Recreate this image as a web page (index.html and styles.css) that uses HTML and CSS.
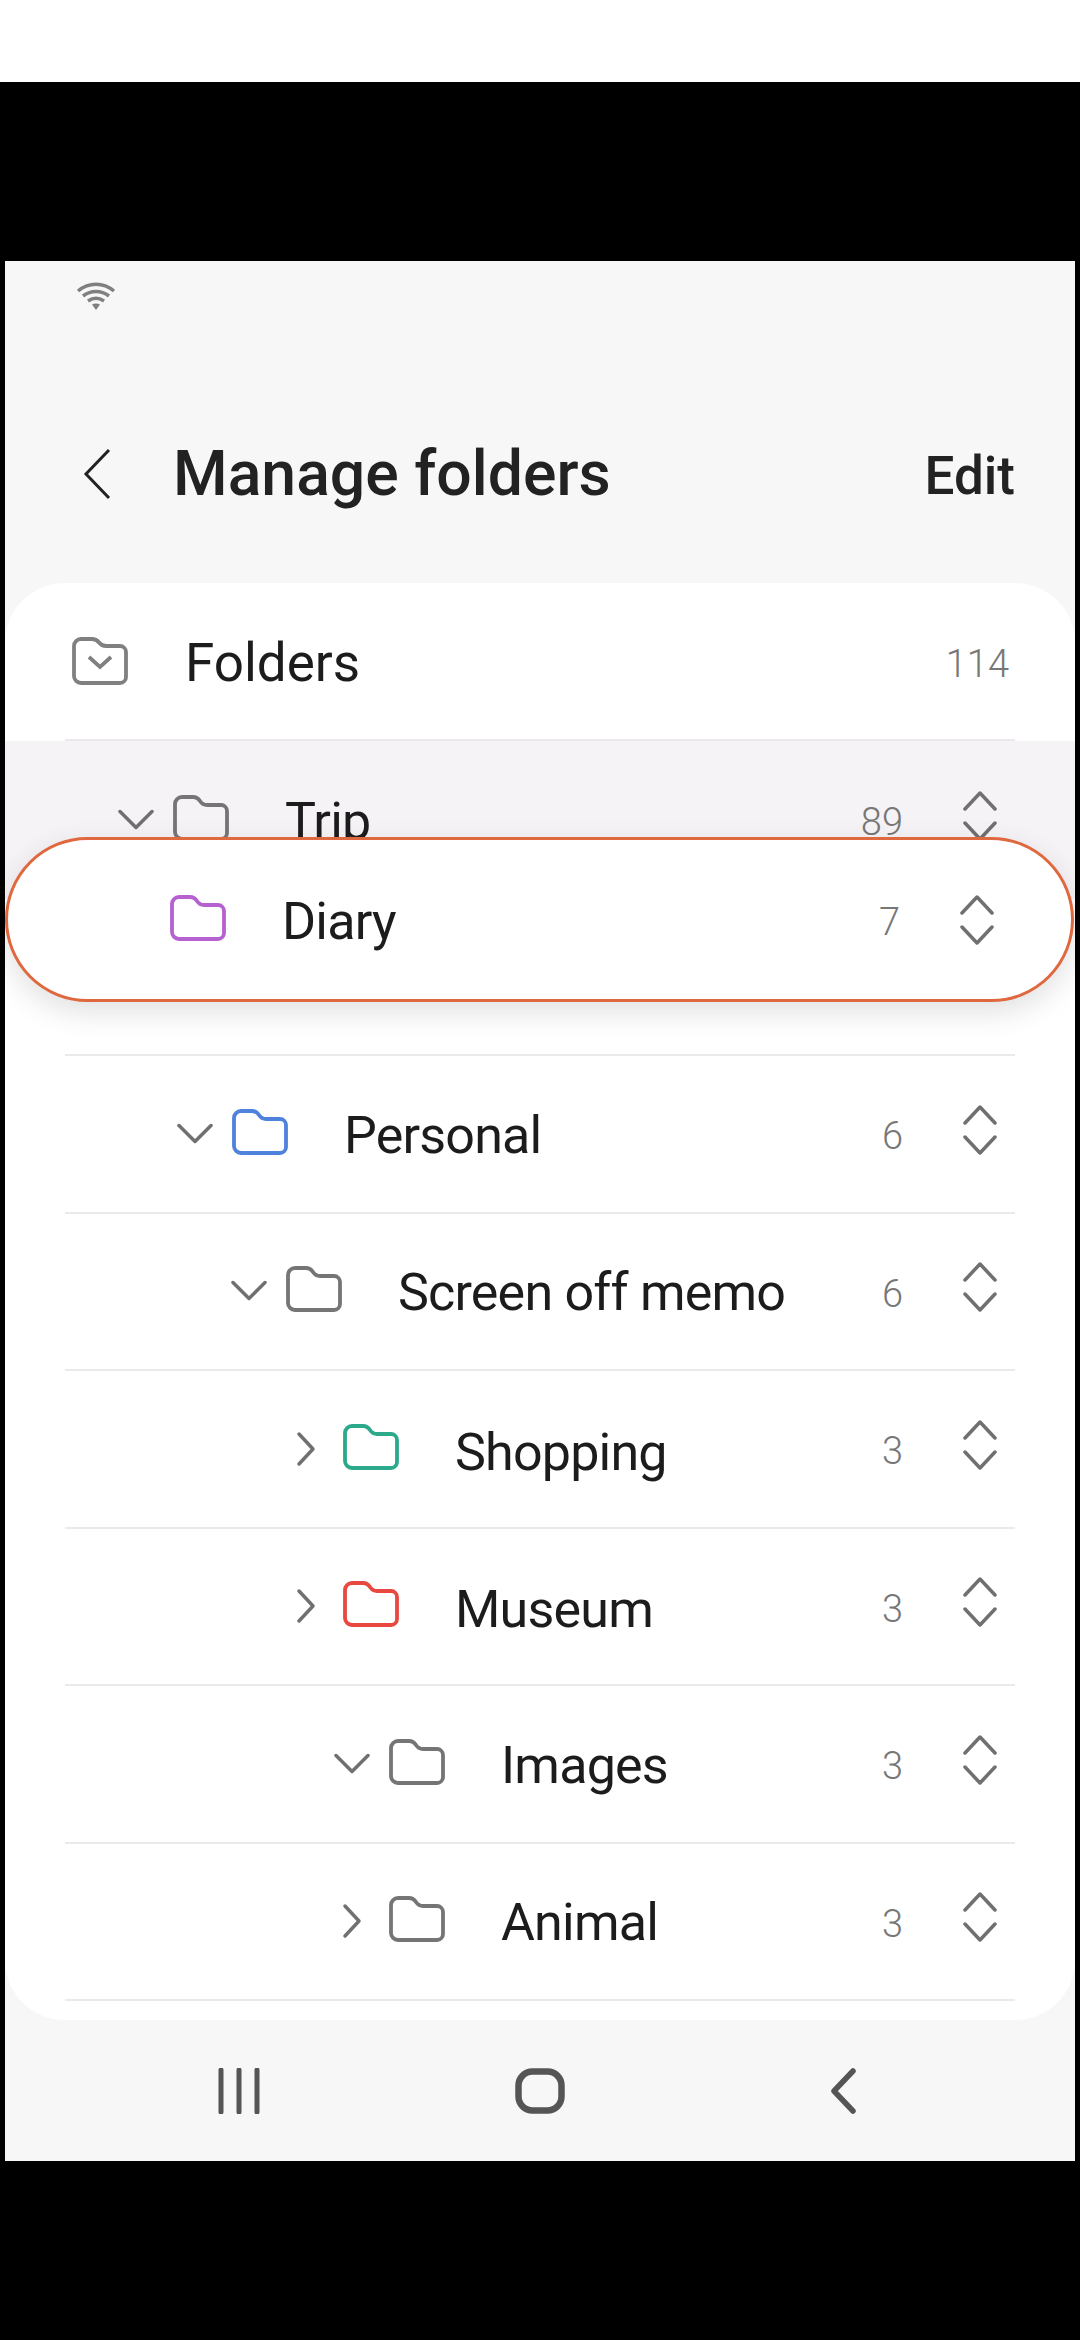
FILE: index.html
```html
<!DOCTYPE html>
<html lang="en">
<head>
    <meta charset="UTF-8">
    <title>Manage folders</title>
    <link rel="stylesheet" href="styles.css">
</head>
<body>
    <svg class="defs" width="0" height="0">
        <symbol id="folder" viewBox="0 0 56 46">
            <path d="M2 9a7 7 0 0 1 7-7h11c3 0 5 1 7 4s4 4 7 4h14a6 6 0 0 1 6 6V38a6 6 0 0 1-6 6H9a7 7 0 0 1-7-7z" fill="none" stroke="currentColor" stroke-width="3.800"/>
        </symbol>
        <symbol id="open" viewBox="0 0 36 36">
            <path d="M2 9.500l16 16 16-16" fill="none" stroke="currentColor" stroke-width="3.500" stroke-linecap="round" stroke-linejoin="round"/>
        </symbol>
        <symbol id="closed" viewBox="0 0 36 36">
            <path d="M11 3l14 15-14 15" fill="none" stroke="currentColor" stroke-width="3.500" stroke-linecap="round" stroke-linejoin="round"/>
        </symbol>
        <symbol id="stepper" viewBox="0 0 34 52">
            <path d="M2 19L17 3l15 16M2 33l15 16 15-16" fill="none" stroke="currentColor" stroke-width="3.500" stroke-linecap="round" stroke-linejoin="round"/>
        </symbol>
    </svg>

    <div class="top-strip"></div>
    <div class="band"></div>

    <div class="screen">
        <div class="status">
            <svg class="wifi" viewBox="0 0 40 28">
                <path d="M2 9c11-9 25-9 36 0M7 14c8-6 18-6 26 0M12 19c5-3.500 11-3.500 16 0" fill="none" stroke="#808080" stroke-width="3.500"/>
                <path d="M16 22.500c2.500-1.500 5.500-1.500 8 0L20 28z" fill="#808080"/>
            </svg>
        </div>

        <header class="header">
            <svg class="back" viewBox="0 0 28 52">
                <path d="M26 2L3 26l23 24" fill="none" stroke="#222" stroke-width="3"/>
            </svg>
            <h1 class="title">Manage folders</h1>
            <span class="edit">Edit</span>
        </header>

        <div class="card">
            <div class="row row-root">
                <svg class="folder-root" viewBox="0 0 56 48">
                    <path d="M2 9a7 7 0 0 1 7-7h11c3 0 5 1 7 3.500s4 3.500 7 3.500h14a6 6 0 0 1 6 6V40a6 6 0 0 1-6 6H9a7 7 0 0 1-7-7z" fill="none" stroke="#808080" stroke-width="3.800"/>
                    <path d="M17 20l11 10 11-10" fill="none" stroke="#808080" stroke-width="3.800"/>
                </svg>
                <span class="name name-root">Folders</span>
                <span class="count">114</span>
            </div>

            <div class="drag-zone">
                <div class="row row-plain level-1">
                    <svg class="arrow"><use href="#open"/></svg>
                    <svg class="folder grey"><use href="#folder"/></svg>
                    <span class="name">Trip</span>
                    <span class="count">89</span>
                    <svg class="stepper"><use href="#stepper"/></svg>
                </div>
            </div>
            <div class="row drag-gap"></div>

            <div class="row level-2">
                <svg class="arrow"><use href="#open"/></svg>
                <svg class="folder blue"><use href="#folder"/></svg>
                <span class="name">Personal</span>
                <span class="count">6</span>
                <svg class="stepper"><use href="#stepper"/></svg>
            </div>
            <div class="row level-3">
                <svg class="arrow"><use href="#open"/></svg>
                <svg class="folder grey"><use href="#folder"/></svg>
                <span class="name">Screen off memo</span>
                <span class="count">6</span>
                <svg class="stepper"><use href="#stepper"/></svg>
            </div>
            <div class="row level-4">
                <svg class="arrow"><use href="#closed"/></svg>
                <svg class="folder green"><use href="#folder"/></svg>
                <span class="name">Shopping</span>
                <span class="count">3</span>
                <svg class="stepper"><use href="#stepper"/></svg>
            </div>
            <div class="row level-4">
                <svg class="arrow"><use href="#closed"/></svg>
                <svg class="folder red"><use href="#folder"/></svg>
                <span class="name">Museum</span>
                <span class="count">3</span>
                <svg class="stepper"><use href="#stepper"/></svg>
            </div>
            <div class="row level-5">
                <svg class="arrow"><use href="#open"/></svg>
                <svg class="folder grey"><use href="#folder"/></svg>
                <span class="name">Images</span>
                <span class="count">3</span>
                <svg class="stepper"><use href="#stepper"/></svg>
            </div>
            <div class="row level-5">
                <svg class="arrow"><use href="#closed"/></svg>
                <svg class="folder grey"><use href="#folder"/></svg>
                <span class="name">Animal</span>
                <span class="count">3</span>
                <svg class="stepper"><use href="#stepper"/></svg>
            </div>
        </div>

        <div class="dragged">
            <svg class="folder purple"><use href="#folder"/></svg>
            <span class="name">Diary</span>
            <span class="count">7</span>
            <svg class="stepper"><use href="#stepper"/></svg>
        </div>

        <nav class="nav">
            <svg class="nav-recent" viewBox="0 0 42 46">
                <path d="M3 2v42M21 2v42M39 2v42" fill="none" stroke="#555" stroke-width="5" stroke-linecap="round"/>
            </svg>
            <svg class="nav-home" viewBox="0 0 50 46">
                <rect x="3.500" y="3.500" width="43" height="39" rx="14" fill="none" stroke="#555" stroke-width="6.500"/>
            </svg>
            <svg class="nav-back" viewBox="0 0 26 46">
                <path d="M23 3L4 23l19 20" fill="none" stroke="#555" stroke-width="5.500" stroke-linecap="round" stroke-linejoin="round"/>
            </svg>
        </nav>
    </div>
</body>
</html>
```

FILE: styles.css
```css
* {
    box-sizing: border-box;
}
html, body {
    margin: 0;
    background-color: #000;
}
body {
    width: 1080px;
    height: 2340px;
    overflow: hidden;
    font-family: Roboto, "Noto Sans", sans-serif;
}
.defs {
    display: block;
    height: 0;
}
.top-strip {
    height: 82px;
    background-color: #fff;
}
.band {
    height: 179px;
}
.screen {
    position: relative;
    height: 1900px;
    margin: 0 5px;
    background-color: #f7f7f7;
    overflow: hidden;
}
.status {
    height: 119px;
    padding: 21px 0 0 71px;
}
.wifi {
    display: block;
    width: 40px;
    height: 28px;
}
.header {
    display: flex;
    align-items: center;
    height: 203px;
    padding: 0 60px 16px 78px;
}
.back {
    width: 28px;
    height: 52px;
    margin-right: 62px;
}
.title {
    flex: 1;
    margin: 0;
    font-size: 62.5px;
    font-weight: 500;
    color: #222;
}
.edit {
    padding-top: 4px;
    font-size: 53px;
    font-weight: 500;
    color: #222;
}
.card {
    height: 1437px;
    background-color: #fff;
    border-radius: 60px;
    overflow: hidden;
}
.row {
    display: flex;
    align-items: center;
    height: 157.5px;
    margin: 0 60px;
    padding-right: 18px;
    border-bottom: 2px solid #ebe9eb;
}
.row-root {
    height: 158px;
    padding-left: 7px;
    padding-right: 6px;
}
.row-plain {
    border-bottom: none;
}
.drag-zone {
    background-color: #f5f3f5;
}
.level-1 { padding-left: 53px; }
.level-2 { padding-left: 112px; }
.level-3 { padding-left: 166px; }
.level-4 { padding-left: 223px; }
.level-5 { padding-left: 269px; }
.arrow {
    flex: none;
    width: 36px;
    height: 36px;
    margin-right: 19px;
    color: #707070;
}
.folder {
    flex: none;
    width: 56px;
    height: 46px;
    margin-right: 56px;
    margin-bottom: 4px;
}
.folder-root {
    flex: none;
    width: 56px;
    height: 48px;
    margin-right: 57px;
}
.grey { color: #757575; }
.blue { color: #4f82dc; }
.green { color: #2ba98a; }
.red { color: #e8483f; }
.purple { color: #b561cf; }
.name {
    flex: 1;
    padding-top: 3px;
    font-size: 52px;
    letter-spacing: -0.8px;
    color: #1c1c1c;
}
.level-4 .name {
    padding-top: 7px;
}
.name-root {
    font-size: 53px;
    letter-spacing: 0;
}
.count {
    padding-top: 5px;
    font-size: 38px;
    font-weight: 300;
    color: #777;
}
.stepper {
    flex: none;
    width: 34px;
    height: 52px;
    margin-left: 60px;
    margin-bottom: 8px;
    color: #707070;
}
.dragged {
    position: absolute;
    top: 576px;
    left: 0;
    width: 1069px;
    height: 165px;
    display: flex;
    align-items: center;
    padding: 0 77px 0 162px;
    background-color: #fff;
    border: 3px solid #e0683f;
    border-radius: 83px;
    box-shadow: 0 10px 30px rgba(0, 0, 0, 0.12);
}
.dragged .stepper {
    margin-bottom: 0;
}
.nav {
    display: flex;
    align-items: center;
    justify-content: center;
    gap: 260px;
    height: 141px;
    padding: 0 7px 0 0;
}
.nav-recent {
    width: 42px;
    height: 46px;
}
.nav-home {
    width: 50px;
    height: 46px;
    margin: 0 5px 0 -5px;
}
.nav-back {
    width: 26px;
    height: 46px;
}
```
